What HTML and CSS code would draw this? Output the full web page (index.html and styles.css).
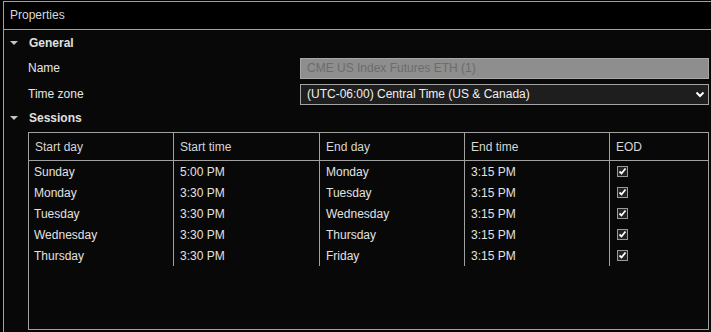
FILE: index.html
```html
<!DOCTYPE html>
<html lang="en">
<head>
    <meta charset="UTF-8">
    <title>Properties</title>
    <link rel="stylesheet" href="styles.css">
</head>
<body>
    <div class="panel">
        <div class="panel-title">Properties</div>
        <div class="panel-body">
            <div class="group-row">
                <span class="caret"></span>
                <span class="group-name">General</span>
            </div>
            <div class="prop-row name-row">
                <span class="prop-label">Name</span>
                <div class="text-box">CME US Index Futures ETH (1)</div>
            </div>
            <div class="prop-row tz-row">
                <span class="prop-label">Time zone</span>
                <div class="combo">
                    <span>(UTC-06:00) Central Time (US &amp; Canada)</span>
                    <svg class="chevron" width="10" height="7" viewBox="0 0 10 7">
                        <polyline points="1.5,1.5 5,5 8.5,1.5" fill="none" stroke="#fff" stroke-width="2"/>
                    </svg>
                </div>
            </div>
            <div class="group-row sessions-row">
                <span class="caret"></span>
                <span class="group-name">Sessions</span>
            </div>

            <div class="grid">
                <div class="grid-head">
                    <div class="cell">Start day</div>
                    <div class="cell">Start time</div>
                    <div class="cell">End day</div>
                    <div class="cell">End time</div>
                    <div class="cell">EOD</div>
                </div>
                <div class="grid-body" id="rows"></div>
            </div>
        </div>
    </div>

    <script>
        var sessions = [
            ["Sunday", "5:00 PM", "Monday", "3:15 PM"],
            ["Monday", "3:30 PM", "Tuesday", "3:15 PM"],
            ["Tuesday", "3:30 PM", "Wednesday", "3:15 PM"],
            ["Wednesday", "3:30 PM", "Thursday", "3:15 PM"],
            ["Thursday", "3:30 PM", "Friday", "3:15 PM"]
        ];
        var check = '<span class="check"><svg width="9" height="9" viewBox="0 0 9 9">' +
            '<polyline points="1.5,4.5 3.5,6.5 7.5,1.5" fill="none" stroke="#fff" stroke-width="1.8"/></svg></span>';
        var html = "";
        sessions.forEach(function (s) {
            html += '<div class="grid-row">';
            s.forEach(function (v) { html += '<div class="cell">' + v + '</div>'; });
            html += '<div class="cell">' + check + '</div></div>';
        });
        document.getElementById("rows").innerHTML = html;
    </script>
</body>
</html>
```

FILE: styles.css
```css
body {
    margin: 0;
    background: #000;
    font-family: "Liberation Sans", Arial, sans-serif;
    font-size: 12px;
    color: #e2e2e2;
    height: 332px;
    overflow: hidden;
}
.panel {
    margin: 1px 0 0 3px;
    border-top: 1px solid #a0a0a0;
    border-left: 1px solid #a0a0a0;
    height: 331px;
}
.panel-title {
    height: 27px;
    line-height: 27px;
    padding-left: 6px;
    color: #d8d8d8;
    background: #000;
    border-bottom: 1px solid #a0a0a0;
}
.panel-body {
    background: #080808;
    height: 303px;
}
.group-row {
    height: 26px;
    display: flex;
    align-items: center;
}
.sessions-row { height: 20px; }
.caret {
    width: 0;
    height: 0;
    margin: 0 11px 0 6px;
    border-left: 4px solid transparent;
    border-right: 4px solid transparent;
    border-top: 4px solid #c4c4c4;
}
.group-name {
    font-weight: bold;
    color: #e0e0e0;
}
.prop-row {
    display: flex;
    align-items: center;
    padding-left: 24px;
}
.name-row { height: 24px; }
.tz-row { height: 28px; }
.prop-label {
    width: 272px;
    color: #e6e6e6;
}
.text-box, .combo {
    box-sizing: border-box;
    width: 409px;
    height: 21px;
    line-height: 19px;
    padding-left: 6px;
}
.text-box {
    background: #8e8e8e;
    border: 1px solid #a8a8a8;
    color: #6c6c6c;
}
.combo {
    display: flex;
    justify-content: space-between;
    align-items: center;
    background: #1e1e1e;
    border: 1px solid #a4a4a4;
    color: #f0f0f0;
    padding-right: 3px;
}
.grid {
    margin: 4px 0 0 24px;
    width: 681px;
    height: 198px;
    box-sizing: border-box;
    border: 1px solid #a0a0a0;
}
.grid-head, .grid-row {
    display: grid;
    grid-template-columns: 145px 146px 145px 145px 1fr;
}
.grid-head {
    height: 27px;
    border-bottom: 1px solid #a0a0a0;
    color: #d6d6d6;
}
.grid-row { height: 21px; }
.cell {
    display: flex;
    align-items: center;
    padding-left: 6px;
    border-right: 1px solid #a0a0a0;
}
.cell:last-child { border-right: none; }
.grid-head .cell { padding-left: 6px; }
.grid-row .cell:first-child { padding-left: 5px; }
.check {
    box-sizing: border-box;
    width: 11px;
    height: 11px;
    margin: -1px 0 0 1px;
    border: 1px solid #9a9a9a;
    background: #222;
    display: flex;
    align-items: center;
    justify-content: center;
}
```
